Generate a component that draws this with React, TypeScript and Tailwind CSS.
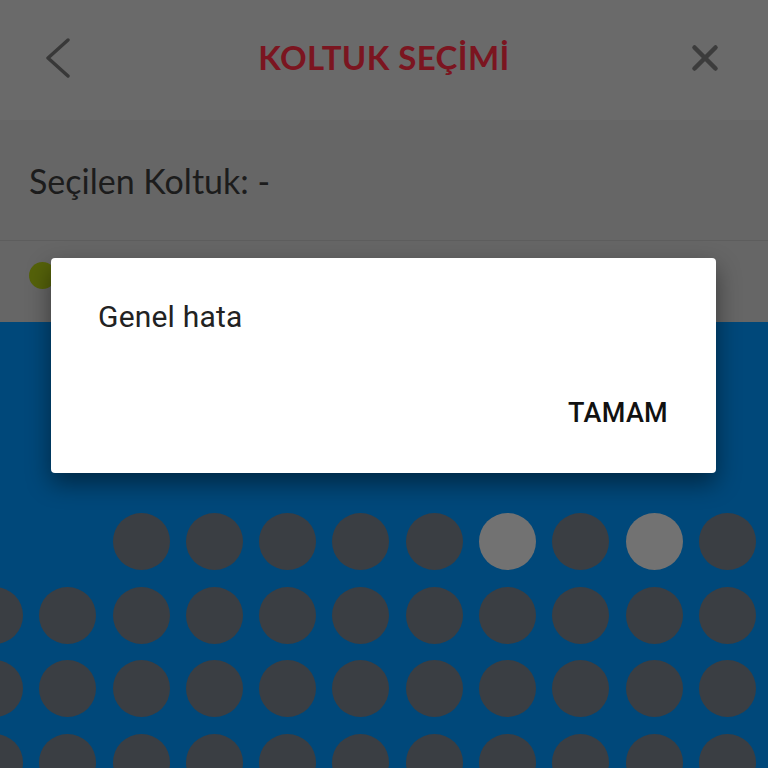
import { X } from 'lucide-react';

const rows = [
  ['empty', 'empty', 'taken', 'taken', 'taken', 'taken', 'taken', 'free', 'taken', 'free', 'taken'],
  ['taken', 'taken', 'taken', 'taken', 'taken', 'taken', 'taken', 'taken', 'taken', 'taken', 'taken'],
  ['taken', 'taken', 'taken', 'taken', 'taken', 'taken', 'taken', 'taken', 'taken', 'taken', 'taken'],
  ['taken', 'taken', 'taken', 'taken', 'taken', 'taken', 'taken', 'taken', 'taken', 'taken', 'taken'],
];

function Seat({ kind }: { kind: string }) {
  if (kind === 'empty') return <div className="w-[57px] h-[57px] shrink-0" />;
  return (
    <div
      className={`w-[57px] h-[57px] shrink-0 rounded-full ${
        kind === 'free' ? 'bg-[#727272]' : 'bg-[#3a3e43]'
      }`}
    />
  );
}

export default function App() {
  return (
    <div className="relative w-[768px] h-[768px] overflow-hidden bg-[#666666] font-['Lato',sans-serif]">
      {/* Header */}
      <header className="h-[120px] flex items-center justify-between pl-[44px] pr-[42px] pb-[4px] bg-[#6a6a6a]">
        <svg width="28" height="40" viewBox="0 0 28 40" fill="none" className="text-[#383838]">
          <polyline points="24,2 4,20 24,38" stroke="currentColor" strokeWidth="3.4" strokeLinecap="round" strokeLinejoin="round" />
        </svg>
        <h1 className="text-[33px] font-bold tracking-[0.4px] text-[#7b1520] ml-[12px]">KOLTUK SEÇİMİ</h1>
        <X className="w-[42px] h-[42px] text-[#3c3c3c]" strokeWidth={2.6} />
      </header>

      {/* Selected seat */}
      <section className="h-[121px] flex items-center px-[29px] pt-[1px] border-b border-[#5d5d5d]">
        <p className="text-[34px] text-[#1c1c1c]">Seçilen Koltuk: -</p>
      </section>

      {/* Legend */}
      <div className="h-[81px] flex items-start px-[29px] pt-[21px]">
        <div className="w-[27px] h-[27px] rounded-full bg-[#55620a]" />
      </div>

      {/* Seat map */}
      <section className="bg-[#00487a] h-[446px] pt-[191px] overflow-hidden">
        <div className="flex flex-col gap-[16.5px] ml-[-34px]">
          {rows.map((row, i) => (
            <div key={i} className="flex gap-[16.3px]">
              {row.map((kind, j) => (
                <Seat key={j} kind={kind} />
              ))}
            </div>
          ))}
        </div>
      </section>

      {/* Error dialog */}
      <div className="absolute left-[51px] top-[258px] w-[665px] h-[215px] bg-white rounded-[4px] shadow-[0_10px_24px_rgba(0,0,0,0.45)] font-['Roboto',sans-serif] flex flex-col">
        <p className="pl-[47px] pt-[38px] text-[30px] text-[#222222] leading-[42px] tracking-[0.2px]">Genel hata</p>
        <div className="mt-auto flex justify-end pr-[48px] pb-[40px]">
          <button className="text-[27px] font-medium text-[#111111] tracking-[0.3px]">TAMAM</button>
        </div>
      </div>
    </div>
  );
}
